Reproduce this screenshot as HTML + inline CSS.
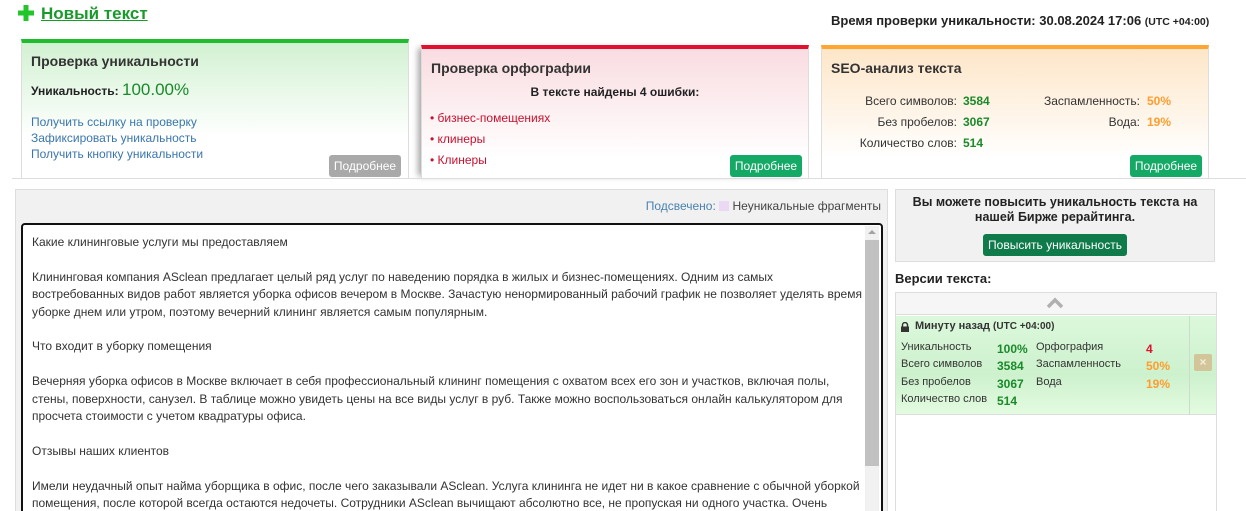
<!DOCTYPE html>
<html><head><meta charset="utf-8"><style>
*{box-sizing:border-box;margin:0;padding:0}
html,body{overflow:hidden}
body{width:1246px;height:511px;background:#fff;font-family:"Liberation Sans",Tahoma,sans-serif;color:#333;font-size:12px;position:relative}
.a{position:absolute;white-space:nowrap}
.b{font-weight:bold}
.card{position:absolute;border:1px solid #ddd;border-top-width:4px}
.btn{position:absolute;color:#fff;font-size:12px;border-radius:3px;text-align:center;line-height:22px}
.g{color:#1a8a2a;font-weight:bold}
.o{color:#ff9d2e;font-weight:bold}
a{color:#3a76ad}
</style></head><body>
<svg class="a" style="left:18px;top:5px" width="16" height="16"><path d="M5.5 0h5v5.5H16v5h-5.5V16h-5v-5.5H0v-5h5.5z" fill="#22c52a"/></svg>
<div class="a b" style="left:41px;top:4px;font-size:17px;color:#1a9a2a;text-decoration:underline">Новый текст</div>
<div class="a b" style="left:831px;top:13px;font-size:13px;color:#222">Время проверки уникальности: 30.08.2024 17:06 <span style="font-size:10.5px">(UTC +04:00)</span></div>

<div class="card" style="left:21px;top:39px;width:388px;height:140px;border-top-color:#1fbd2e;background:linear-gradient(#d2f1d2,#fff 70%)">
<div class="a b" style="left:9px;top:10px;font-size:14px">Проверка уникальности</div>
<div class="a b" style="left:9px;top:37px;font-size:12px;color:#222">Уникальность: <span style="font-size:17px;color:#1a8a2a;font-weight:normal">100.00%</span></div>
<div class="a" style="left:9px;top:71px;line-height:16px"><a>Получить ссылку на проверку</a><br><a>Зафиксировать уникальность</a><br><a>Получить кнопку уникальности</a></div>
<div class="btn" style="left:307px;top:112px;width:72px;background:#a9a9a9">Подробнее</div>
</div>

<div class="card" style="left:421px;top:45px;width:388px;height:134px;border-top-color:#e0102e;background:linear-gradient(#f9dce1,#fff 85%);box-shadow:-6px 0 6px -3px rgba(0,0,0,.35)">
<div class="a b" style="left:9px;top:11px;font-size:14px">Проверка орфографии</div>
<div class="a b" style="left:0;width:386px;text-align:center;top:36px;font-size:12px;color:#222">В тексте найдены 4 ошибки:</div>
<div class="a" style="left:8px;top:59px;line-height:21px;color:#c8102e">• бизнес-помещениях<br>• клинеры<br>• Клинеры</div>
<div class="btn" style="left:308px;top:106px;width:72px;background:#14aa66">Подробнее</div>
</div>

<div class="card" style="left:821px;top:45px;width:388px;height:134px;border-top-color:#ffa630;background:linear-gradient(#fde6c8,#fff 85%)">
<div class="a b" style="left:9px;top:11px;font-size:14px">SEO-анализ текста</div>
<div class="a" style="left:0;width:135px;top:42px;line-height:21px;text-align:right">Всего символов:<br>Без пробелов:<br>Количество слов:</div>
<div class="a g" style="left:141px;top:42px;line-height:21px">3584<br>3067<br>514</div>
<div class="a" style="left:150px;width:168px;top:42px;line-height:21px;text-align:right">Заспамленность:<br>Вода:</div>
<div class="a o" style="left:325px;top:42px;line-height:21px">50%<br>19%</div>
<div class="btn" style="left:308px;top:106px;width:72px;background:#14aa66">Подробнее</div>
</div>
<div class="a" style="left:12px;top:178px;width:1234px;border-top:1px solid #ddd"></div>

<div class="a" style="left:15px;top:189px;width:873px;height:330px;background:#f1f1f1;border:1px solid #ddd"></div>
<div class="a" style="right:365px;top:199px;color:#4a82b0">Подсвечено: <span style="display:inline-block;width:10px;height:10px;background:#ead8f5;vertical-align:-1px"></span> <span style="color:#444">Неуникальные фрагменты</span></div>
<div class="a" style="left:21px;top:223px;width:862px;height:300px;background:#fff;border:2px solid #111;border-radius:4px"></div>
<div class="a" style="left:865px;top:226px;width:14px;height:290px;background:#f1f1f1"></div>
<div class="a" style="left:865px;top:240px;width:14px;height:226px;background:#c1c1c1"></div>
<div class="a" style="left:868px;top:230px;width:0;height:0;border:4px solid transparent;border-bottom-color:#a3a3a3;border-top:0"></div>
<div class="a" style="left:32px;top:234px;line-height:17.4px;color:#333">Какие клининговые услуги мы предоставляем<br><br>Клининговая компания ASclean предлагает целый ряд услуг по наведению порядка в жилых и бизнес-помещениях. Одним из самых<br>востребованных видов работ является уборка офисов вечером в Москве. Зачастую ненормированный рабочий график не позволяет уделять время<br>уборке днем или утром, поэтому вечерний клининг является самым популярным.<br><br>Что входит в уборку помещения<br><br>Вечерняя уборка офисов в Москве включает в себя профессиональный клининг помещения с охватом всех его зон и участков, включая полы,<br>стены, поверхности, санузел. В таблице можно увидеть цены на все виды услуг в руб. Также можно воспользоваться онлайн калькулятором для<br>просчета стоимости с учетом квадратуры офиса.<br><br>Отзывы наших клиентов<br><br>Имели неудачный опыт найма уборщика в офис, после чего заказывали ASclean. Услуга клининга не идет ни в какое сравнение с обычной уборкой<br>помещения, после которой всегда остаются недочеты. Сотрудники ASclean вычищают абсолютно все, не пропуская ни одного участка. Очень</div>

<div class="a" style="left:895px;top:189px;width:320px;height:73px;background:#f1f1f1;border:1px solid #ddd"></div>
<div class="a b" style="left:895px;width:320px;text-align:center;top:195px;font-size:12.5px;line-height:15px;color:#222">Вы можете повысить уникальность текста на<br>нашей Бирже рерайтинга.</div>
<div class="btn" style="left:983px;top:234px;width:144px;background:#0f7a4a">Повысить уникальность</div>
<div class="a b" style="left:895px;top:271px;font-size:13px;color:#222">Версии текста:</div>
<div class="a" style="left:895px;top:292px;width:322px;height:230px;border:1px solid #ddd;background:#fff"></div>
<div class="a" style="left:896px;top:293px;width:320px;height:22px;background:#f6f6f6;border-bottom:1px solid #ddd"></div>
<svg class="a" style="left:1046px;top:297px" width="18" height="12"><path d="M2 10L9 3l7 7" stroke="#b0b0b0" stroke-width="3.5" fill="none"/></svg>
<div class="a" style="left:896px;top:316px;width:320px;height:99px;background:linear-gradient(#dcf8dc,#cdf1cd 60%,#e3fbe0);border-bottom:1px solid #ddd"></div>
<div class="a" style="left:1189px;top:316px;width:1px;height:99px;background:#ccdccc"></div>
<div class="a" style="left:1194px;top:354px;width:18px;height:17px;background:#d3c59a;border-radius:2px;color:#f3ecd8;font-weight:bold;text-align:center;line-height:17px;font-size:12px">×</div>
<svg class="a" style="left:901px;top:322px" width="8" height="10"><path d="M1.5 4.5V3a2.5 2.5 0 015 0v1.5" stroke="#333" stroke-width="1.4" fill="none"/><rect x="0" y="4.5" width="8" height="5.5" fill="#333"/></svg>
<div class="a b" style="left:915px;top:320px;font-size:11px;color:#333">Минуту назад <span style="font-size:10px">(UTC +04:00)</span></div>
<div class="a" style="left:901px;top:339px;line-height:17.3px;font-size:11px">Уникальность<br>Всего символов<br>Без пробелов<br>Количество слов</div>
<div class="a g" style="left:997px;top:341px;line-height:17.3px;font-size:12px">100%<br>3584<br>3067<br>514</div>
<div class="a" style="left:1036px;top:339px;line-height:17.3px;font-size:11px">Орфография<br>Заспамленность<br>Вода</div>
<div class="a b" style="left:1146px;top:341px;line-height:17.3px;font-size:12px"><span style="color:#e0102e">4</span><br><span style="color:#ff9d2e">50%</span><br><span style="color:#ff9d2e">19%</span></div>
</body></html>
